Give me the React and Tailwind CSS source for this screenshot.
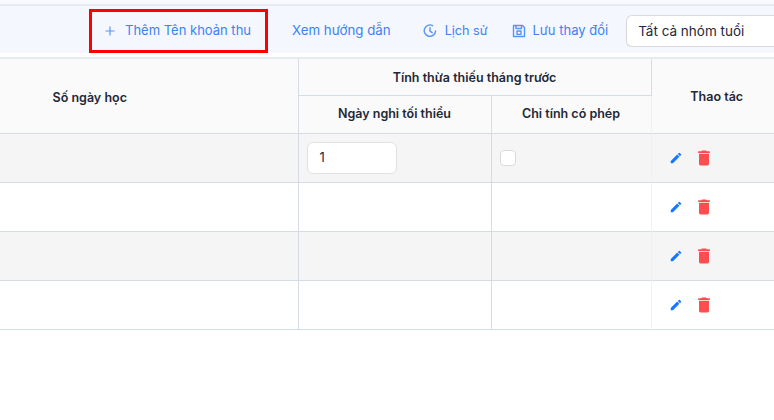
import { Plus } from 'lucide-react';

const rows = [
  { shaded: true, input: true },
  { shaded: false },
  { shaded: true },
  { shaded: false },
];

function PencilIcon() {
  return (
    <svg width="14" height="14" viewBox="0 0 24 24" fill="#1677ff">
      <path d="M3 17.25V21h3.75L17.81 9.94l-3.75-3.75L3 17.25zM20.71 7.04a1 1 0 0 0 0-1.41l-2.34-2.34a1 1 0 0 0-1.41 0l-1.83 1.83 3.75 3.75 1.83-1.83z" />
    </svg>
  );
}

function TrashIcon() {
  return (
    <svg width="20" height="20" viewBox="0 0 24 24" fill="#ff4d4f">
      <path d="M6 19c0 1.1.9 2 2 2h8c1.1 0 2-.9 2-2V7H6v12zM19 4h-3.5l-1-1h-5l-1 1H5v2h14V4z" />
    </svg>
  );
}

function ClockIcon() {
  return (
    <svg width="14" height="14" viewBox="0 0 14 14" fill="none" stroke="#5b93f5" strokeWidth="1.4" strokeLinecap="round">
      <path d="M9.6 1.6A5.7 5.7 0 1 0 12.6 7" />
      <path d="M7 3.8V7.2L9.2 8.6" />
    </svg>
  );
}

function SaveIcon() {
  return (
    <svg width="14" height="14" viewBox="0 0 14 14" fill="none" stroke="#5b93f5" strokeWidth="1.4" strokeLinejoin="round">
      <path d="M1.5 1.5H10.5L12.5 3.5V12.5H1.5Z" />
      <path d="M4 1.5V4.5H9.5V1.5" />
      <rect x="5" y="7" width="4" height="3.4" />
    </svg>
  );
}

export default function App() {
  return (
    <div className="h-[420px] w-[774px] overflow-hidden bg-white font-['Inter',sans-serif] text-[#1f2937]">
      <div className="h-[6px] border-b-2 border-[#e6eaf2] bg-[#f7f9fe]" />
      <div className="flex h-[47px] items-center bg-[#f4f7fe] pl-[89px] pt-[3px] text-[13px] text-[#3b82f6]">
        <button className="flex h-[44px] w-[179px] items-center gap-[8px] border-[3px] border-[#ff0000] pl-[11px]">
          <Plus size={14} strokeWidth={2} className="text-[#5b93f5]" />
          <span>Thêm Tên khoản thu</span>
        </button>
        <span className="ml-[24px] text-[13.3px]">Xem hướng dẫn</span>
        <button className="ml-[32px] flex items-center gap-[8px] text-[12.6px]">
          <ClockIcon />
          <span>Lịch sử</span>
        </button>
        <button className="ml-[25px] flex items-center gap-[6px]">
          <SaveIcon />
          <span>Lưu thay đổi</span>
        </button>
        <div className="ml-[18px] flex h-[32px] flex-1 items-center rounded-l-md border border-r-0 border-[#d9d9d9] bg-white pl-[11px] text-[13.5px] text-[#1f2937]">
          Tất cả nhóm tuổi
        </div>
      </div>
      <div className="h-[4px]" />
      <table className="w-[774px] table-fixed border-collapse text-[12.5px]">
        <colgroup>
          <col className="w-[298px]" />
          <col className="w-[193px]" />
          <col className="w-[160px]" />
          <col />
        </colgroup>
        <thead className="bg-[#fafafa]">
          <tr className="h-[37px] border-t-2 border-[#e6eaf2]">
            <th rowSpan={2} className="border-r border-[#d5dce6] pr-[118px] pt-[5px] font-semibold">Số ngày học</th>
            <th colSpan={2} className="border-b border-r border-[#d5dce6] pt-[4px] font-semibold">Tính thừa thiếu tháng trước</th>
            <th rowSpan={2} className="pl-[8px] pt-[4px] font-semibold">Thao tác</th>
          </tr>
          <tr className="h-[38px]">
            <th className="border-r border-[#d5dce6] pt-[1px] font-semibold">Ngày nghỉ tối thiểu</th>
            <th className="border-r border-[#f0f0f0] pt-[1px] font-semibold">Chỉ tính có phép</th>
          </tr>
        </thead>
        <tbody>
          {rows.map((row, i) => (
            <tr key={i} className={`h-[49px] border-y border-[#d5dce6] ${row.shaded ? 'bg-[#f5f5f5]' : 'bg-white'}`}>
              <td className="border-r border-[#d5dce6]" />
              <td className="border-r border-[#d5dce6] pl-[8px]">
                {row.input && (
                  <div className="flex h-[32px] w-[90px] items-center rounded-md border border-[#e2e2e2] bg-white pl-[12px] text-[13px]">1</div>
                )}
              </td>
              <td className="border-r border-[#f0f0f0] pl-[8px]">
                {row.input && <div className="h-[16px] w-[16px] rounded border border-[#d9d9d9] bg-white" />}
              </td>
              <td className="pl-[17px]">
                <div className="flex items-center gap-[11px]">
                  <PencilIcon />
                  <TrashIcon />
                </div>
              </td>
            </tr>
          ))}
        </tbody>
      </table>
    </div>
  );
}
